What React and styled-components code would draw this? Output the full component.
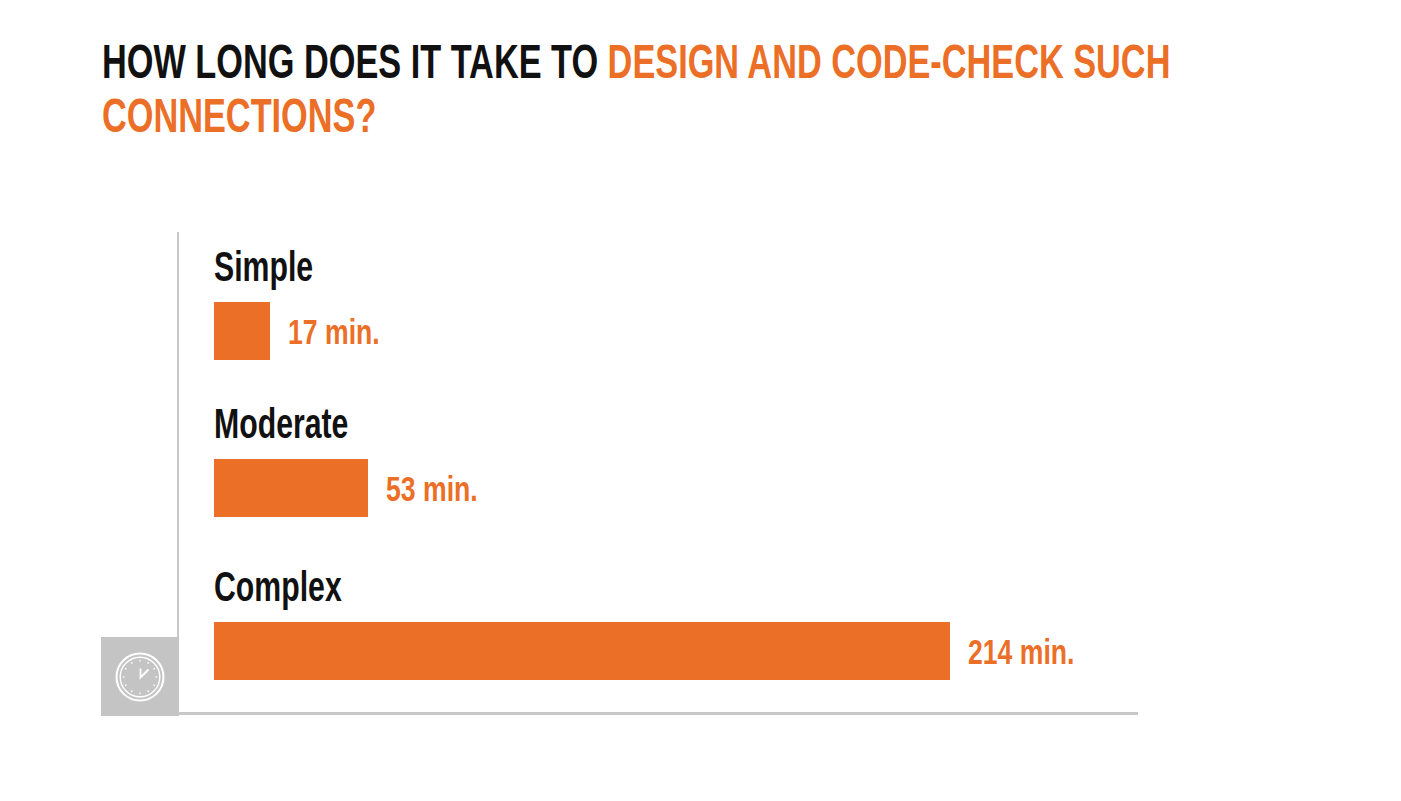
import React from 'react';
import styled, { createGlobalStyle } from 'styled-components';

const GlobalStyle = createGlobalStyle`
  html, body {
    margin: 0;
    padding: 0;
    background: #ffffff;
  }

  body {
    font-family: "Liberation Sans", Arial, sans-serif;
  }
`;

const ORANGE = '#ec6f28';

const Page = styled.div`
  width: 1401px;
  height: 801px;
  box-sizing: border-box;
  padding: 34px 0 0 102px;
  overflow: hidden;
`;

const Title = styled.h1`
  margin: 0;
  font-size: 49px;
  line-height: 54px;
  font-weight: 700;
  color: #111111;
`;

const Squeeze = styled.span`
  display: inline-block;
  white-space: nowrap;
  transform: scaleX(${(p) => p.$sx});
  transform-origin: left center;
`;

const TitleLine = styled.div`
  height: 54px;
`;

const Accent = styled.span`
  color: ${ORANGE};
`;

const Chart = styled.div`
  position: relative;
  margin: 90px 0 0 75px;
  width: 924px;
  padding: 14px 0 32px 35px;
  box-sizing: content-box;
  border-left: 2px solid #c8c8c8;
  border-bottom: 3px solid #c8c8c8;
`;

const Row = styled.div`
  margin-top: ${(p) => p.$top}px;

  &:first-child {
    margin-top: 0;
  }
`;

const Label = styled.div`
  font-size: 42px;
  line-height: 42px;
  font-weight: 700;
  color: #111111;
  margin-bottom: 14px;
`;

const BarLine = styled.div`
  display: flex;
  align-items: center;
  gap: 18px;
`;

const Bar = styled.div`
  width: ${(p) => p.$width}px;
  height: 58px;
  background: ${ORANGE};
  flex-shrink: 0;
`;

const Value = styled.div`
  font-size: 35px;
  line-height: 35px;
  font-weight: 700;
  color: ${ORANGE};
`;

const ClockBox = styled.div`
  position: absolute;
  left: -78px;
  bottom: -4px;
  width: 78px;
  height: 79px;
  background: #c4c4c4;
  display: flex;
  align-items: center;
  justify-content: center;
`;

const rows = [
  { name: 'Simple', value: '17 min.', width: 56, top: 0 },
  { name: 'Moderate', value: '53 min.', width: 154, top: 43 },
  { name: 'Complex', value: '214 min.', width: 736, top: 49 },
];

function ClockIcon() {
  const ticks = Array.from({ length: 12 }, (_, i) => {
    const a = (i * Math.PI) / 6;
    return {
      x1: 39 + Math.sin(a) * 15.5,
      y1: 39 - Math.cos(a) * 15.5,
      x2: 39 + Math.sin(a) * 17.3,
      y2: 39 - Math.cos(a) * 17.3,
    };
  });

  return (
    <svg width="78" height="78" viewBox="0 0 78 78" fill="none" stroke="#ffffff">
      <circle cx="39" cy="39" r="23.5" strokeWidth="2" />
      <circle cx="39" cy="39" r="19.8" strokeWidth="1.4" />
      {ticks.map((t, i) => (
        <line key={i} x1={t.x1} y1={t.y1} x2={t.x2} y2={t.y2} strokeWidth="1.3" />
      ))}
      <path d="M39.5 30.5 V39.5 L47.5 31.5" strokeWidth="1.8" strokeLinejoin="miter" />
    </svg>
  );
}

export default function App() {
  return (
    <>
      <GlobalStyle />
      <Page>
        <Title>
          <TitleLine>
            <Squeeze $sx={0.7}>
              HOW LONG DOES IT TAKE TO <Accent>DESIGN AND CODE-CHECK SUCH</Accent>
            </Squeeze>
          </TitleLine>
          <TitleLine>
            <Squeeze $sx={0.7}>
              <Accent>CONNECTIONS?</Accent>
            </Squeeze>
          </TitleLine>
        </Title>

        <Chart>
          {rows.map((row) => (
            <Row key={row.name} $top={row.top}>
              <Label>
                <Squeeze $sx={0.72}>{row.name}</Squeeze>
              </Label>
              <BarLine>
                <Bar $width={row.width} />
                <Value>
                  <Squeeze $sx={0.76}>{row.value}</Squeeze>
                </Value>
              </BarLine>
            </Row>
          ))}
          <ClockBox>
            <ClockIcon />
          </ClockBox>
        </Chart>
      </Page>
    </>
  );
}
